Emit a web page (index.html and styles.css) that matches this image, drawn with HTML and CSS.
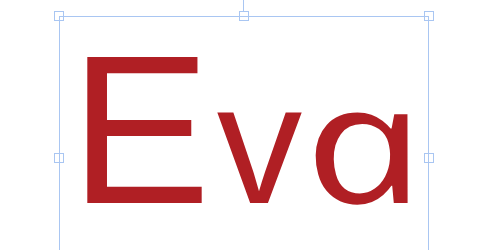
FILE: index.html
```html
<!DOCTYPE html>
<html lang="en">
<head>
<meta charset="utf-8">
<title>Eva</title>
<link rel="stylesheet" href="styles.css">
</head>
<body>
<div class="stage">
  <div class="word"><span class="ch ch-e">E</span><span class="ch ch-v">v</span><span class="ch ch-a">a</span></div>
  <div class="selection">
    <span class="rotate-stem"></span>
    <span class="handle h-tl"></span>
    <span class="handle h-tm"></span>
    <span class="handle h-tr"></span>
    <span class="handle h-ml"></span>
    <span class="handle h-mr"></span>
  </div>
</div>
</body>
</html>
```
FILE: styles.css
```css
html, body {
  margin: 0;
  padding: 0;
  background: #ffffff;
}

.stage {
  position: relative;
  width: 500px;
  height: 250px;
  overflow: hidden;
  background: #ffffff;
  padding-top: 25px;
  box-sizing: border-box;
}

.word {
  display: flex;
  align-items: baseline;
  padding-left: 70px;
  color: #b01f24;
}

.ch {
  display: block;
  line-height: 1;
}

.ch-e {
  font-family: "Liberation Sans", Arial, sans-serif;
  font-size: 211px;
}

.ch-v {
  font-family: "Liberation Sans", Arial, sans-serif;
  font-size: 171px;
  margin-left: 6px;
}

.ch-a {
  font-family: "Open Sans", "Noto Sans", sans-serif;
  font-style: italic;
  font-size: 166px;
  margin-left: 11px;
  padding: 0 16px;
  transform-origin: 50% 147px;
  transform: scaleX(1.28) skewX(12deg);
}

.selection {
  position: absolute;
  left: 59px;
  top: 16px;
  width: 370px;
  height: 283px;
  box-sizing: border-box;
  border: 1px solid #a9c6f2;
}

.rotate-stem {
  position: absolute;
  left: 183px;
  top: -17px;
  width: 1px;
  height: 12px;
  background: #a9c6f2;
}

.handle {
  position: absolute;
  width: 10px;
  height: 10px;
  box-sizing: border-box;
  border: 1px solid #a9c6f2;
}

.h-tl { left: -6px; top: -6px; }
.h-tm { left: calc(50% - 5px); top: -6px; }
.h-tr { right: -6px; top: -6px; }
.h-ml { left: -6px; top: calc(50% - 5px); }
.h-mr { right: -6px; top: calc(50% - 5px); }
```
